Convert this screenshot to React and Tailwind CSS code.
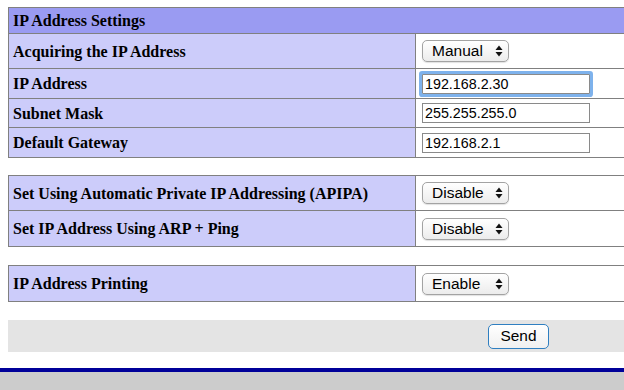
import React from 'react';

const serif = { fontFamily: '"Liberation Serif", "Times New Roman", serif' };

function Arrows() {
  return (
    <svg width="8" height="12" viewBox="0 0 8 12" className="absolute right-[6px] top-1/2 -translate-y-1/2 pointer-events-none">
      <path d="M4 0.5 L7.5 5 L0.5 5 Z" fill="#111" />
      <path d="M4 11.5 L7.5 7 L0.5 7 Z" fill="#111" />
    </svg>
  );
}

function Select({ value, options }) {
  return (
    <div className="relative inline-flex">
      <select
        defaultValue={value}
        className="appearance-none w-[87px] h-[22px] pl-[9px] pr-5 rounded-[5px] border border-[#a3a3a3] bg-gradient-to-b from-white to-[#ececec] text-[15.5px] leading-none text-black shadow-[0_1px_1px_rgba(0,0,0,0.12)] outline-none"
        style={{ fontFamily: '"Liberation Sans", Arial, sans-serif' }}
      >
        {options.map(o => <option key={o}>{o}</option>)}
      </select>
      <Arrows />
    </div>
  );
}

function TextInput({ value, focused }) {
  return (
    <input
      defaultValue={value}
      className={
        'w-[168px] h-[20px] px-[2px] border border-[#8a8a8a] bg-white text-[14.3px] leading-none text-black outline-none ' +
        (focused ? 'rounded-[1px] shadow-[0_0_0_3px_#7eb2ec]' : '')
      }
      style={{ fontFamily: '"Liberation Sans", Arial, sans-serif' }}
    />
  );
}

function Row({ label, h, children, last }) {
  return (
    <div className={'flex ' + h + (last ? '' : ' border-b border-[#808080]')}>
      <div className="w-[407px] shrink-0 bg-[#ccccfa] border-r border-[#808080] flex items-center pl-[4px] pt-[1px] text-[16px] font-bold text-black" style={serif}>
        {label}
      </div>
      <div className="flex-1 bg-white flex items-center pl-[6px]">{children}</div>
    </div>
  );
}

function App() {
  return (
    <div className="w-full h-[390px] overflow-hidden bg-white">
      <div className="pt-[7px] pl-[8px]">
        <div className="w-[640px] border border-[#808080]">
          <div className="h-[26px] bg-[#9a9bf2] border-b border-[#808080] flex items-center pl-[4px] pt-[1px] text-[16px] font-bold text-black" style={serif}>
            IP Address Settings
          </div>
          <Row label="Acquiring the IP Address" h="h-[35px]">
            <Select value="Manual" options={['Auto', 'Manual']} />
          </Row>
          <Row label="IP Address" h="h-[30px]">
            <TextInput value="192.168.2.30" focused />
          </Row>
          <Row label="Subnet Mask" h="h-[29px]">
            <TextInput value="255.255.255.0" />
          </Row>
          <Row label="Default Gateway" h="h-[29px]" last>
            <TextInput value="192.168.2.1" />
          </Row>
        </div>

        <div className="w-[640px] border border-[#808080] mt-[17px]">
          <Row label="Set Using Automatic Private IP Addressing (APIPA)" h="h-[35px]">
            <Select value="Disable" options={['Enable', 'Disable']} />
          </Row>
          <Row label="Set IP Address Using ARP + Ping" h="h-[35px]" last>
            <Select value="Disable" options={['Enable', 'Disable']} />
          </Row>
        </div>

        <div className="w-[640px] border border-[#808080] mt-[18px]">
          <Row label="IP Address Printing" h="h-[35px]" last>
            <Select value="Enable" options={['Enable', 'Disable']} />
          </Row>
        </div>

        <div className="w-[640px] h-[32px] bg-[#e4e4e4] mt-[18px] flex items-center pl-[480px]">
          <button
            className="w-[61px] h-[25px] rounded-[5px] border border-[#2f7fc1] bg-gradient-to-b from-white to-[#f0f0f0] text-[15.4px] text-black leading-none"
            style={{ fontFamily: '"Liberation Sans", Arial, sans-serif' }}
          >
            Send
          </button>
        </div>
      </div>
      <div className="mt-[16px] h-[4px] bg-[#000099]" />
      <div className="h-[40px] bg-[#cccccc]" />
    </div>
  );
}

export default App;
